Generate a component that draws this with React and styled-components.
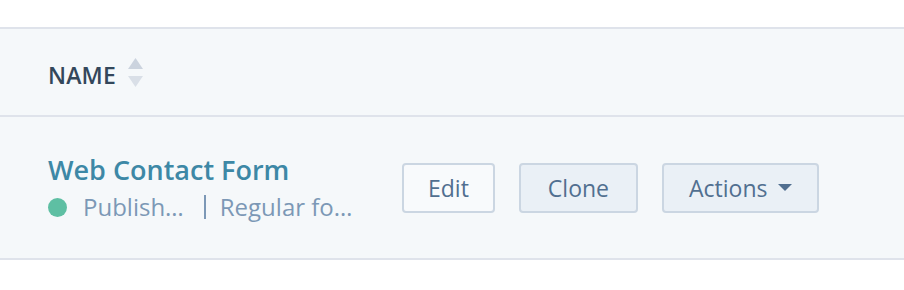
import React from "react";
import styled, { createGlobalStyle } from "styled-components";

const Global = createGlobalStyle`
  html, body { margin: 0; padding: 0; background: #ffffff; }
  body { font-family: "Open Sans", Lato, sans-serif; -webkit-font-smoothing: antialiased; }
`;

const Table = styled.div`
  padding-top: 27px;
  width: 904px;
`;

const HeaderRow = styled.div`
  display: flex;
  align-items: center;
  height: 86px;
  padding-left: 48px;
  background: #f5f8fa;
  border-top: 2px solid #dfe3eb;
  border-bottom: 2px solid #dfe3eb;
`;

const HeaderLabel = styled.span`
  font-size: 23px;
  font-weight: 600;
  color: #33475b;
  letter-spacing: 0.2px;
  line-height: 30px;
  padding-top: 6px;
`;

const SortIcon = styled.svg`
  margin-left: 12px;
  display: block;
`;

const BodyRow = styled.div`
  display: flex;
  align-items: center;
  height: 141px;
  padding-left: 48px;
  background: #f5f8fa;
  border-bottom: 2px solid #dfe3eb;
`;

const NameCell = styled.div`
  display: flex;
  flex-direction: column;
  width: 354px;
`;

const Title = styled.a`
  font-size: 27px;
  font-weight: 600;
  color: #3d88a6;
  text-decoration: none;
  line-height: 34px;
`;

const Meta = styled.div`
  display: flex;
  align-items: center;
  margin-top: 5px;
  font-size: 24px;
  color: #7c98b6;
  line-height: 30px;
`;

const Dot = styled.span`
  width: 19px;
  height: 19px;
  border-radius: 50%;
  background: #5ebfa3;
  margin-right: 16px;
`;

const Divider = styled.span`
  width: 2px;
  height: 24px;
  background: #7c98b6;
  margin: 0 14px 0 ${(p) => p.$left}px;
`;

const Actions = styled.div`
  display: flex;
  gap: 24px;
`;

const Button = styled.button`
  display: flex;
  align-items: center;
  justify-content: center;
  gap: 11px;
  height: 50px;
  padding: 0 ${(p) => p.$pad}px;
  border: 2px solid #cbd6e2;
  border-radius: 4px;
  background: ${(p) => (p.$secondary ? "#eaf0f6" : "#f8fafc")};
  color: #516f90;
  font-family: "Open Sans", Lato, sans-serif;
  font-size: 23px;
  cursor: pointer;
`;

const Caret = styled.svg`
  display: block;
`;

export default function App() {
  return (
    <>
      <Global />
      <Table>
        <HeaderRow>
          <HeaderLabel>NAME</HeaderLabel>
          <SortIcon width="15" height="29" viewBox="0 0 15 29">
            <path d="M7.5 0 L15 11 L0 11 Z" fill="#cbd3de" />
            <path d="M0 18 L15 18 L7.5 29 Z" fill="#d9dfe7" />
          </SortIcon>
        </HeaderRow>
        <BodyRow>
          <NameCell>
            <Title href="#">Web Contact Form</Title>
            <Meta>
              <Dot />
              <span>Publish…</span>
              <Divider $left={20} />
              <span>Regular fo…</span>
            </Meta>
          </NameCell>
          <Actions>
            <Button $pad={24}>Edit</Button>
            <Button $pad={27} $secondary>Clone</Button>
            <Button $pad={25} $secondary>
              Actions
              <Caret width="14" height="7" viewBox="0 0 14 7">
                <path d="M0 0 L14 0 L7 7 Z" fill="#516f90" />
              </Caret>
            </Button>
          </Actions>
        </BodyRow>
      </Table>
    </>
  );
}
